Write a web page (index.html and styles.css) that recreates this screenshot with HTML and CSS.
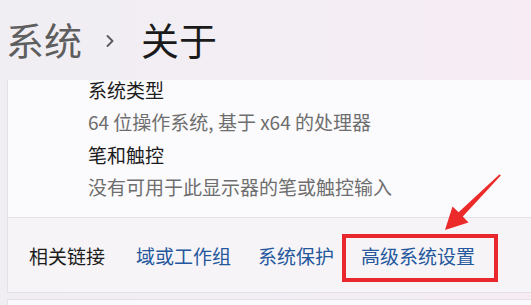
FILE: index.html
```html
<!DOCTYPE html>
<html lang="zh-CN">
<head>
<meta charset="utf-8">
<link rel="stylesheet" href="styles.css">
</head>
<body>
<div class="page">
  <header class="crumb">
    <span class="crumb-parent">系统</span>
    <svg class="chev" width="8" height="12" viewBox="0 0 8 12"><path d="M1.5 1 L6.5 6 L1.5 11" fill="none" stroke="#5a5a5a" stroke-width="1.8" stroke-linecap="round" stroke-linejoin="round"/></svg>
    <span class="crumb-current">关于</span>
  </header>
  <section class="card">
    <div class="specs">
      <div class="spec-title first">系统类型</div>
      <div class="spec-value">64 位操作系统, 基于 x64 的处理器</div>
      <div class="spec-title">笔和触控</div>
      <div class="spec-value">没有可用于此显示器的笔或触控输入</div>
    </div>
    <div class="related">
      <span class="related-label">相关链接</span>
      <a class="link">域或工作组</a>
      <a class="link">系统保护</a>
      <a class="link">高级系统设置</a>
    </div>
  </section>
  <section class="card next"></section>
  <div class="highlight"></div>
  <svg class="arrow" width="70" height="70" viewBox="435 168 70 70">
    <polygon points="445,230 452.5,206.5 458.6,212.2 499.6,174.2 500.8,175.4 462.8,216.4 468.5,222.5" fill="#ec2a2a"/>
  </svg>
</div>
</body>
</html>
```
FILE: styles.css
```css
html, body {
  margin: 0;
  padding: 0;
}
body {
  width: 531px;
  height: 305px;
  overflow: hidden;
  background: linear-gradient(90deg, #f1eef3 0%, #f2eef4 45%, #f7ecf4 100%);
  font-family: "Noto Sans CJK SC", "Noto Sans", sans-serif;
}
.page {
  position: relative;
  width: 531px;
  height: 305px;
}
.crumb {
  height: 80px;
  display: flex;
  align-items: center;
  padding-left: 6px;
  box-sizing: border-box;
  font-size: 38px;
  line-height: 42px;
  padding-bottom: 2px;
}
.crumb-parent {
  color: #5e5e5e;
}
.chev {
  margin: 4px 27px 0 24px;
}
.crumb-current {
  color: #1a1a1a;
}
.card {
  margin-left: 7px;
  background: #fbfafc;
  border-left: 1px solid #e4e1e6;
  border-bottom: 1px solid #e4e1e6;
}
.specs {
  padding: 0 0 20px 80px;
  font-size: 19px;
  line-height: 20px;
}
.spec-title {
  color: #1c1c1c;
  margin-top: 13px;
}
.spec-title.first {
  margin-top: 0;
}
.spec-value {
  color: #6e6e6e;
  margin-top: 12px;
}
.related {
  height: 74px;
  background: #f6f4f7;
  border-top: 1px solid #e4e1e6;
  display: flex;
  align-items: center;
  gap: 27px;
  padding-left: 21px;
  font-size: 19px;
}
.related-label {
  color: #1c1c1c;
  margin-right: 4px;
}
.link {
  color: #24579c;
}
.card.next {
  margin-top: 6px;
  height: 20px;
  border-top: 1px solid #e4e1e6;
  background: #faf9fb;
}
.highlight {
  position: absolute;
  left: 342px;
  top: 234px;
  width: 156px;
  height: 48px;
  box-sizing: border-box;
  border: 4px solid #e8282c;
}
.arrow {
  position: absolute;
  left: 435px;
  top: 168px;
}
```
